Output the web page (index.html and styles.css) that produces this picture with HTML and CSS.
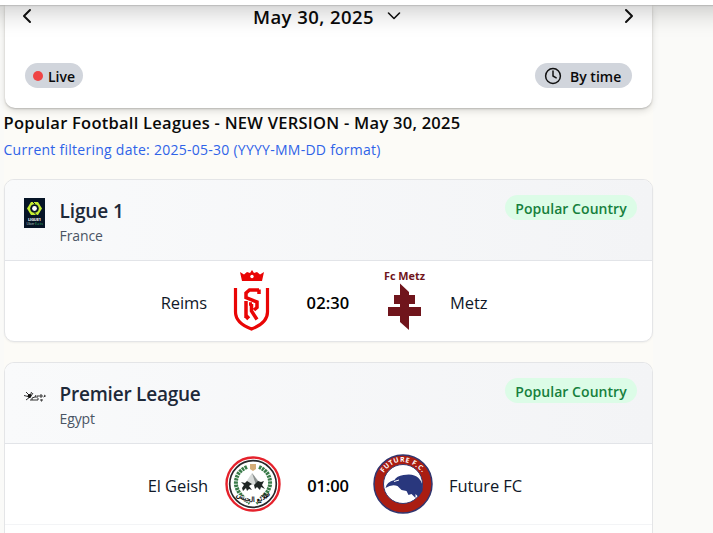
FILE: index.html
```html
<!DOCTYPE html>
<html lang="en">
<head>
<meta charset="utf-8">
<title>Popular Football Leagues</title>
<link rel="stylesheet" href="styles.css">
</head>
<body>
<header class="topbar"></header>
<main class="column">
  <section class="datebox">
    <div class="daterow">
      <svg class="arrow" width="10" height="16" viewBox="0 0 10 16"><path d="M8 2 2 8l6 6"/></svg>
      <div class="date"><span>May 30, 2025</span><svg width="14" height="10" viewBox="0 0 14 10"><path d="m1.500 2 5.500 5.500L12.500 2"/></svg></div>
      <svg class="arrow" width="10" height="16" viewBox="0 0 10 16"><path d="m2 2 6 6-6 6"/></svg>
    </div>
    <div class="filters">
      <div class="pill live"><i class="dot"></i><span>Live</span></div>
      <div class="pill bytime"><svg width="18" height="18" viewBox="0 0 18 18"><circle cx="9" cy="9" r="7.400"/><path d="M9 4v5l3.200 1.800"/></svg><span>By time</span></div>
    </div>
  </section>
  <h1>Popular Football Leagues - NEW VERSION - May 30, 2025</h1>
  <p class="note">Current filtering date: 2025-05-30 (YYYY-MM-DD format)</p>

  <section class="card">
    <div class="cardhead">
      <svg class="crest" width="22" height="30" viewBox="0 0 22 30">
        <path d="M0 0h21v30H0z" fill="#061426"/>
        <path d="M7 4h7l4 6.500-4 6.500H7L3 10.500z" fill="#c6ed32"/>
        <circle cx="10.500" cy="10.500" r="4.300" fill="#061426"/><circle cx="10.500" cy="10.500" r="2.400" fill="#fff"/>
        <path d="m8 3 3 3M10.500 15l3 3" stroke="#061426"/>
        <text x="4" y="22.500" font-size="4" font-weight="700" fill="#fff" textLength="13">LIGUE1</text>
        <text x="2.500" y="27" font-size="3.500" fill="#b9c5ca" textLength="8">Uber</text>
        <text x="11" y="27" font-size="3.500" fill="#38b86a" textLength="8">Eats</text>
      </svg>
      <div class="names"><h2>Ligue 1</h2><p>France</p></div>
      <span class="badge">Popular Country</span>
    </div>
    <div class="match">
      <span class="team home">Reims</span>
      <svg width="60" height="60" viewBox="0 0 60 60">
        <path d="M18 1 22 3.500 25 1 28 2l2-3 2 3 3-1 3 2.500L42 1l-2 9H20z" fill="#e90505"/><circle cx="30" cy="5.500" r="1.700" fill="#fff"/>
        <path d="M13.500 17v24q0 11 16 17 16-6 16-17V17" fill="none" stroke="#e90505" stroke-width="3.200"/>
        <path d="M37 19H27.500l-3.500 3v4.500l11 4.500v5.500l-3 2.500M24 30v13M24 47v-6M29.500 33v7l5.500 8.500M37 18.500V23M24 48l3-3M27 33h3" fill="none" stroke="#e90505" stroke-width="3.500"/>
      </svg>
      <span class="time wide">02:30</span>
      <svg width="60" height="60" viewBox="0 0 60 60">
        <text x="10" y="9" class="metztext" textLength="41" lengthAdjust="spacingAndGlyphs">Fc Metz</text>
        <path d="M26 12.500l9 8.500V24h6v9h-6v3h12v9H35v14l-9-8V45H14v-9h12v-3h-6v-9h6z" fill="#70151c"/>
      </svg>
      <span class="team away">Metz</span>
    </div>
  </section>

  <section class="card last">
    <div class="cardhead">
      <svg class="crest" width="22" height="30" viewBox="0 0 22 30">
        <g fill="none" stroke="#333"><path d="m0 14.500 4 1M2 11l3 3M7.500 11l-1 3M9 12l-2 3M2 19l4-3M8 17l3-1M12 14l-1 2h3v-2M16 14v2h2v-2zM20 14l1.500 1-2 1M7 20v-2h2v2M11 18v2M13 20v-2h2M17 18v2h1v-2"/></g><circle cx="5.500" cy="15" r="1.900" fill="#111"/>
      </svg>
      <div class="names"><h2 class="tight">Premier League</h2><p>Egypt</p></div>
      <span class="badge">Popular Country</span>
    </div>
    <div class="match">
      <span class="team home">El Geish</span>
      <svg width="60" height="60" viewBox="0 0 60 60">
        <circle cx="30" cy="30" r="26.500" fill="#fff" stroke="#e5222c" stroke-width="2.400"/>
        <circle cx="30" cy="30" r="23.300" fill="none" stroke="#29292c" stroke-width="1.700"/>
        <path d="M24 13q-12 5-11 18 2 10 14 18M36 13q12 5 11 18-2 10-14 18" fill="none" stroke="#397b49" stroke-width="4" stroke-dasharray="2.400 .8"/>
        <path d="M27 10h6v5l-3 2-3-2z" fill="#d5ad78"/>
        <path d="m21 31 8-12 10 12z" fill="#d8dbda"/><path d="m29 19 4 12h5z" fill="#8b908f"/>
        <path d="m18 28 4 1 2-2 5 3-3 2 3 4-3-1-2 2-1-3-3 3-1-3 2-3zM31 31l4-4 3 1 3-1-2 4 3 4-4-2-1 3-3-3-2 2z" fill="#202625"/>
        <path id="geish-arc" d="M11 40q19 16 38 0" fill="none"/>
        <path d="M11 38q19 12 38 0l-3 6q-16 9-32 0z" fill="#fff"/>
        <text font-size="7" font-weight="700" fill="#111"><textPath href="#geish-arc" startOffset="3">طلائع الجيش</textPath></text>
      </svg>
      <span class="time">01:00</span>
      <svg width="60" height="60" viewBox="0 0 60 60">
        <circle cx="30" cy="30" r="29" fill="#aa1d12" stroke="#30356f" stroke-width="1.500"/>
        <circle cx="30" cy="30" r="19.500" fill="#fff" stroke="#35386f" stroke-width="1"/>
        <path d="M12.500 34q1-6 9-8 2-4 9-5 10-2 15 3 5 5 4 13l-4 6-3-3v4l-4-4-3 1-2-4-5-1-4-4q-6-2-12 2z" fill="#29377d"/>
        <path d="m21 27.500 5-1.500" stroke="#fff"/>
        <path id="future-arc" d="M10.500 19Q28-4 51 20" fill="none"/>
        <text font-size="6.800" font-weight="700" fill="#fff"><textPath href="#future-arc" textLength="46">FUTURE F.C.</textPath></text>
      </svg>
      <span class="team away">Future FC</span>
    </div>
  </section>
</main>
</body>
</html>
```
FILE: styles.css
```css
* { box-sizing: border-box; }
body {
  margin: 0;
  height: 533px;
  overflow: hidden;
  background: #fafaf8;
  color: #0a0a0a;
  font-family: "Open Sans", "Noto Sans", sans-serif;
}
h1, h2, p { margin: 0; white-space: nowrap; }
svg { display: block; flex: none; overflow: visible; }
.topbar {
  position: relative;
  z-index: 2;
  height: 5px;
  background: #fff;
  box-shadow: 0 1px 1px rgba(0,0,0,.12), 0 -20px 26px 26px rgba(0,0,0,.22);
}
.column { width: 649px; margin-left: 4px; background: #fcfbf7; }
.datebox {
  width: 647px;
  height: 103px;
  margin-left: 1px;
  background: #fff;
  border-radius: 0 0 10px 10px;
  box-shadow: 0 1px 2px rgba(0,0,0,.2), 0 3px 7px rgba(0,0,0,.13);
}
.daterow { height: 58px; padding: 3px 18px 0 17px; display: flex; justify-content: space-between; align-items: flex-start; }
.daterow svg, .bytime svg { fill: none; stroke: #111; stroke-width: 2; stroke-linecap: round; stroke-linejoin: round; }
.date { display: flex; align-items: center; gap: 13px; height: 18px; margin-left: -2px; font-size: 18.500px; letter-spacing: .45px; font-weight: 600; line-height: 18px; }
.date svg { stroke-width: 1.600; margin-top: -2px; }
.filters { display: flex; justify-content: space-between; padding: 0 20px; }
.pill { height: 25px; border-radius: 13px; background: #d1d5dc; display: flex; align-items: center; font-size: 14px; font-weight: 600; white-space: nowrap; }
.pill span { padding-top: 1px; }
.live { width: 58px; padding-left: 8px; gap: 5px; }
.dot { width: 10px; height: 10px; border-radius: 50%; background: #ef4444; }
.bytime { width: 97px; padding-left: 9px; gap: 8px; }
.bytime svg { stroke-width: 1.500; }
h1 { height: 28px; line-height: 30px; margin-left: -.5px; font-size: 16.500px; letter-spacing: .25px; font-weight: 600; }
.note { height: 43px; line-height: 27px; margin-left: -.5px; font-size: 14px; letter-spacing: .26px; color: #2f63e8; }
.card {
  margin-bottom: 20px;
  border: 1px solid #e4e5e7;
  border-radius: 10px;
  background: #fff;
  overflow: hidden;
  box-shadow: 0 1px 2px rgba(0,0,0,.05);
}
.cardhead { display: flex; height: 81px; padding: 15px 15px 0 19px; border-bottom: 1px solid #e2e4e8; background: linear-gradient(90deg, #f9fafb, #f3f4f6); }
.crest { margin-top: 3px; }
.names { margin-left: 13.500px; flex: 1; }
h2 { height: 31px; line-height: 33px; font-size: 19px; letter-spacing: -.1px; font-weight: 600; color: #1e2939; }
.tight { letter-spacing: -.22px; }
.names p { height: 20px; line-height: 20px; font-size: 14px; letter-spacing: -.1px; color: #4a5565; }
.badge { width: 132px; height: 25px; border-radius: 13px; text-align: center; line-height: 27px; background: #dcfce7; color: #16803d; font-size: 14px; letter-spacing: .05px; font-weight: 600; white-space: nowrap; }
.match { height: 80px; display: flex; align-items: center; }
.team { flex: 1 1 0; padding-top: 3px; font-size: 16.500px; letter-spacing: -.1px; color: #101828; white-space: nowrap; }
.home { text-align: right; padding-right: 15px; }
.away { padding-left: 16px; }
.time { width: 90px; padding-top: 3px; text-align: center; font-size: 16.500px; letter-spacing: .1px; font-weight: 600; color: #000; }
.wide { width: 92px; }
.last { height: 171px; margin-bottom: 0; border-bottom: 0; border-radius: 10px 10px 0 0; box-shadow: none; }
.last .match { height: 81px; border-bottom: 1px solid #f3f4f6; }
.last .match svg { margin-top: -1px; }
.last .time { letter-spacing: -.2px; }
.metztext { font-family: "Open Sans", sans-serif; font-size: 10px; font-weight: 700; fill: #70151c; }
```
